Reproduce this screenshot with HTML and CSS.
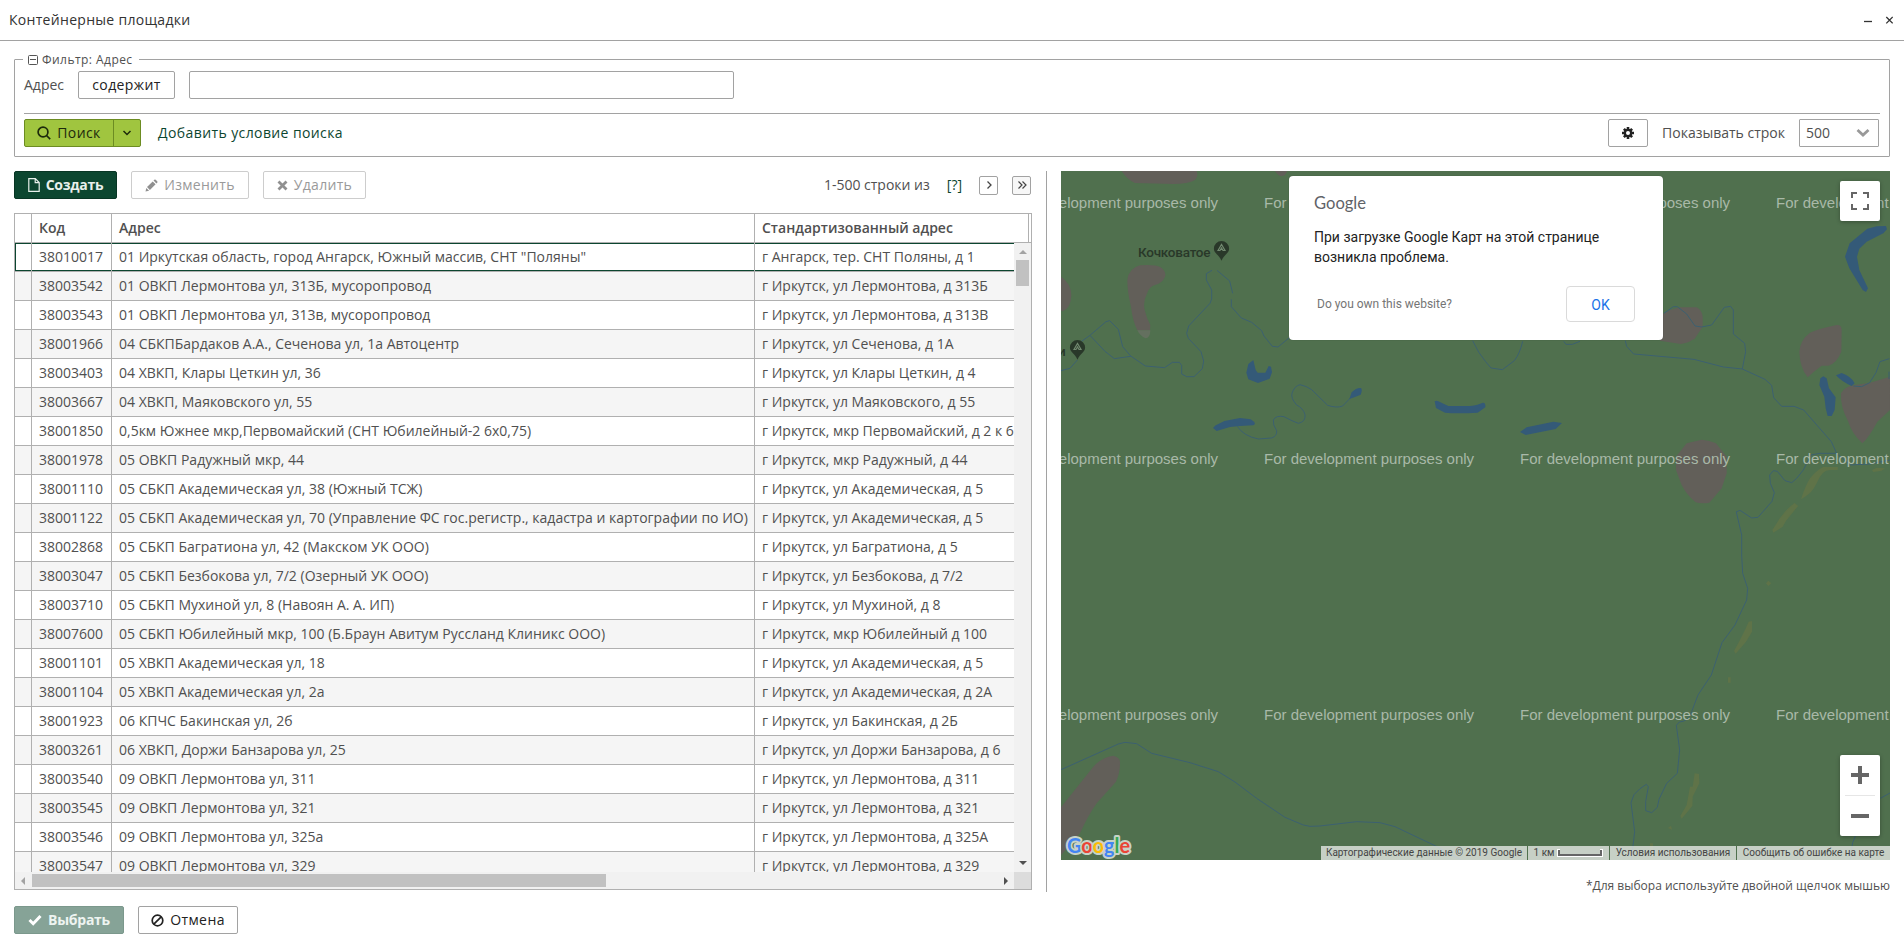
FILE: index.html
```html
<!DOCTYPE html>
<html lang="ru">
<head>
<meta charset="utf-8">
<title>Контейнерные площадки</title>
<link rel="stylesheet" href="styles.css">
</head>
<body>
<header class="titlebar">
  <h1 class="title">Контейнерные площадки</h1>
  <svg class="win-icons" width="30" height="12" viewBox="0 0 30 12"><path d="M1 7.500h8" stroke="#333" stroke-width="1.300"/><path d="M23.300 3l6.400 6.400M29.700 3l-6.400 6.400" stroke="#333" stroke-width="1.300"/></svg>
</header>

<section class="filter">
  <div class="legend"><svg width="10" height="10" viewBox="0 0 10 10"><rect x=".5" y=".5" width="9" height="9" rx="1" fill="none" stroke="#555"/><path d="M2 4.500h6" stroke="#555"/></svg>Фильтр: Адрес</div>
  <div class="condition">
    <span class="label">Адрес</span>
    <button class="btn contains">содержит</button>
    <input class="value" type="text">
  </div>
  <div class="actions">
    <div class="split"><button class="search"><svg width="14" height="14" viewBox="0 0 14 14" fill="none" stroke="#1d2a0c" stroke-width="1.700"><circle cx="6" cy="6" r="4.900"/><path d="M9.500 9.500l3.700 3.700"/></svg>Поиск</button><button class="drop"><svg width="10" height="8" viewBox="0 0 10 8" fill="none" stroke="#1d2a0c" stroke-width="1.500"><path d="M1.500 2l3.500 3.500L8.500 2"/></svg></button></div>
    <a class="add">Добавить условие поиска</a>
    <button class="btn gear"><svg width="12" height="12" viewBox="0 0 12 12"><g stroke="#222" stroke-width="2.600"><path d="M6 0v12M0 6h12M1.900 1.900l8.200 8.200M10.100 1.900l-8.200 8.200"/></g><circle cx="6" cy="6" r="4.300" fill="#222"/><circle cx="6" cy="6" r="2" fill="#fff"/></svg></button>
    <span class="label">Показывать строк</span>
    <div class="select"><span>500</span><svg width="14" height="10" viewBox="0 0 14 10" fill="none" stroke="#999" stroke-width="2.800"><path d="M1.500 2l5.500 5L12.500 2"/></svg></div>
  </div>
</section>

<main class="main">
  <section class="left">
    <div class="toolbar">
      <button class="btn primary create"><svg width="12" height="14" viewBox="0 0 12 14" fill="none" stroke="#e8f0ec" stroke-width="1.200"><path d="M.8.7h6.500l3.900 3.900v8.700H.8zM7.200.7v4h4"/></svg>Создать</button>
      <button class="btn disabled edit"><svg width="13" height="13" viewBox="0 0 13 13" fill="#909090"><path d="M.5 12.500l.8-3.600 2.800 2.800zM2 8.100L7.700 2.400l2.900 2.900L4.900 11zM8.500 1.600l.8-.8q.7-.7 1.400 0l1.500 1.500q.7.700 0 1.400l-.8.800z"/></svg>Изменить</button>
      <button class="btn disabled delete"><svg width="11" height="11" viewBox="0 0 11 11" stroke="#909090" stroke-width="2.800"><path d="M1.500 1.500l8 8M9.500 1.500l-8 8"/></svg>Удалить</button>
      <span class="pager-text">1-500 строки из</span>
      <a class="count">[?]</a>
      <button class="page"><svg width="10" height="10" viewBox="0 0 10 10" fill="none" stroke="#444" stroke-width="1.300"><path d="M3.500 1.500L7 5 3.500 8.500"/></svg></button>
      <button class="page last"><svg width="10" height="10" viewBox="0 0 10 10" fill="none" stroke="#444" stroke-width="1.200"><path d="M1.500 1.500L5 5 1.500 8.500M5.500 1.500L9 5 5.500 8.500"/></svg></button>
    </div>
    <div class="grid">
      <div class="row head"><span></span><span>Код</span><span>Адрес</span><span>Стандартизованный адрес</span></div>
      <div class="viewport">
        <div class="rows" id="rows"></div>
        <div class="vscroll"><i class="up"></i><i class="vthumb"></i><i class="down"></i></div>
        <div class="hscroll"><i class="lft"></i><i class="hthumb"></i><i class="rgt"></i></div>
        <div class="corner"></div>
      </div>
    </div>
  </section>

  <section class="right">
    <div class="map">
      <svg class="canvas" width="829" height="689" viewBox="1061 171 829 689">
        <rect x="1061" y="171" width="829" height="689" fill="#50704e"/>
        <g transform="translate(1040 160) scale(.33333)">
          <g fill="#625f59">
            <path d="M245 33Q262 60 285 69L400 72Q445 72 465 60Q476 48 470 33zM705 33Q718 55 735 45L742 33z"/>
            <path d="M262 360Q266 325 300 316Q345 313 362 322Q380 335 375 350Q368 368 345 375Q328 380 322 398Q308 425 314 450Q320 475 331 495L330 511H292Q277 480 273 440Q262 395 262 360zM63 350Q93 370 94 405Q93 445 68 454L63 452z"/>
          </g>
          <path d="M292 511H331Q330 535 317 535Q300 528 292 511z" fill="#64705f"/>
          <g class="river">
            <path d="M63 632L90 625 112 600M112 553L150 526 198 485 209 482 235 508 248 560 272 588 316 618 374 623 397 607H418L425 616V642L440 650H462L487 626 491 603 483 575 445 535 440 520 446 498 510 430 515 417V390L499 360V341L516 331M150 526L195 574 223 596 272 589M531 331L569 363 578 400M574 418V440L604 474 635 487 665 512 672 528 697 559 714 561 747 534"/>
            <path d="M592 799Q610 828 655 837L695 834Q712 828 710 812Q698 795 700 780Q708 765 732 770Q758 784 775 790Q798 785 795 764Q790 745 770 735Q752 715 756 700Q763 678 780 674Q800 678 815 689L863 736Q890 745 908 738L935 710"/>
          </g>
          <g class="lake">
            <path d="M640 600L625 612 619 638 625 658 654 669 689 656 696 637 693 620 686 618 676 638H653L647 630z"/>
            <path d="M519 804Q525 795 535 792L553 783 600 774 632 778Q644 785 645 792L640 796 600 798 570 801 530 813zM935 697Q950 682 963 684Q968 690 962 704L945 711 928 717z"/>
            <path d="M1184 724Q1190 720 1195 724L1225 738H1290Q1315 735 1328 728Q1338 727 1336 742L1313 758Q1250 762 1215 758L1188 744z"/>
          </g>
        </g>
        <g transform="translate(1440 160) scale(.33333)">
          <g fill="#625f59">
            <path d="M662 465L690 450 720 442H770Q785 450 788 470V500L765 535Q745 550 722 552L660 542z"/>
            <path d="M1103 652Q1080 625 1078 575Q1080 540 1110 518Q1130 508 1190 495Q1204 493 1205 510L1204 575Q1190 610 1165 617H1145Q1120 635 1103 652z"/>
            <path d="M1203 700Q1215 680 1240 676L1290 668 1350 650V750L1312 785Q1285 835 1267 850Q1235 820 1225 785Q1200 740 1203 700z"/>
            <path d="M785 839L808 843 828 850 860 890V940L845 985 808 1028Q785 1032 767 1027Q740 1005 725 975L708 930V890L740 850z"/>
          </g>
          <g fill="#5f7348">
            <path d="M1150 921H1194L1193 930H1170Q1145 930 1130 970Q1115 1000 1095 1010L1083 1018Q1095 980 1110 955Q1130 930 1150 921zM1296 930L1310 923 1335 925 1325 932 1300 936zM1064 1029L1074 1038 1040 1080H1016Q1040 1045 1064 1029z"/>
          </g>
          <g class="river">
            <path d="M98 542Q115 580 137 605L153 624 187 629 223 602Q240 580 248 544M371 544L378 553H397L420 544M556 542L560 559 581 582 762 598 850 621 907 627 975 658 995 676 1001 713 1025 739H1062L1091 750 1174 845 1190 880M672 460L700 440H712L740 462 765 498 785 501 815 495 853 442 872 439 880 450V522L914 550 917 575 907 627M1240 678L1265 680 1289 668 1308 638 1320 605 1348 596M1347 635V657"/>
            <path d="M1190 880H1140L1113 885 1090 930 1070 955 1055 968 1035 962 1012 934 1000 932 989 945 991 970 1003 998 996 1024 954 1072 935 1074 900 1051 888 1056M1190 880L1230 915 1290 912 1350 900"/>
          </g>
          <g class="lake">
            <path d="M240 816L260 802 340 785 366 789 347 807 257 825zM1338 198L1341 208 1330 220 1280 245 1258 266 1251 290 1258 330 1284 385 1278 396 1268 390 1228 325 1215 290 1229 250 1282 206 1310 199z"/>
            <path d="M1150 649L1160 655 1167 685 1187 712 1184 750 1175 768H1163L1157 745 1153 710 1138 675 1141 655zM1188 646L1205 639Q1235 650 1244 670L1235 678Q1205 665 1188 646z"/>
          </g>
        </g>
        <g transform="translate(1640 440) scale(.33333)">
          <g fill="#5f7348"><path d="M463 190L474 198 448 225 428 260 400 278 397 270 420 235zM385 422L394 430 385 438 378 430zM326 545L336 543V575L318 605 287 641 282 633 300 600 315 570zM264 712H272V728H264zM164 1000L177 1002 178 1030 158 1070 157 1098 125 1136 121 1128 140 1095 150 1040H158zM93 1157L96 1169 84 1164zM30 1210H39V1240H28z"/></g>
          <path class="river" d="M289 216L305 285V345L308 400 323 445 320 480 285 555 246 608 214 705 174 765 155 815M155 815Q145 845 118 846L109 856 119 930 112 1000 80 1030 57 1078 52 1102 35 1118 17 1112V1085L25 1040 19 1033 0 1046-18 1064-27 1088-16 1175-26 1260M721 1075L750 1059M646 1188L638 1208 630 1260"/>
        </g>
        <g transform="translate(1040 700) scale(.33333)">
          <path fill="#625f59" d="M63 322L160 200Q185 172 220 167Q242 172 240 190Q240 220 228 245L170 310Q145 345 120 400L63 466z"/>
          <path class="river" d="M63 209L235 132 255 127 290 131 335 160 450 188 535 215 585 246 650 295 735 352 790 375 810 379 840 378 950 365 1020 368 1065 380 1185 437 1300 500"/>
        </g>
        <g fill="#293829">
          <text class="place" x="1138" y="256.500" textLength="72.500">Кочковатое</text>
          <text class="place" x="1058" y="356">и</text>
          <path d="M1221.500 241a7.600 7.600 0 0 1 7.600 7.600c0 5-5 5.800-7.600 12.200c-2.600-6.400-7.600-7.200-7.600-12.200a7.600 7.600 0 0 1 7.600-7.600z"/>
          <path d="M1077.500 340a7.600 7.600 0 0 1 7.600 7.600c0 5-5 5.800-7.600 12.200c-2.600-6.400-7.600-7.200-7.600-12.200a7.600 7.600 0 0 1 7.600-7.600z"/>
        </g>
        <path d="M1218 250.500l3.500-6 3.500 6h-2l-1.500-2.500-1.500 2.500zM1074 349.500l3.500-6 3.500 6h-2l-1.500-2.500-1.500 2.500z" fill="none" stroke="#71896f" stroke-width="1.200"/>
        <g class="mark">
          <text x="1008" y="208">For development purposes only</text><text x="1264" y="208">For development purposes only</text><text x="1520" y="208">For development purposes only</text><text x="1776" y="208">For development purposes only</text>
          <text x="1008" y="464">For development purposes only</text><text x="1264" y="464">For development purposes only</text><text x="1520" y="464">For development purposes only</text><text x="1776" y="464">For development purposes only</text>
          <text x="1008" y="720">For development purposes only</text><text x="1264" y="720">For development purposes only</text><text x="1520" y="720">For development purposes only</text><text x="1776" y="720">For development purposes only</text>
        </g>
        <text class="logo" x="1067" y="853" textLength="63" lengthAdjust="spacingAndGlyphs"><tspan fill="#4285f4">G</tspan><tspan fill="#ea4335">o</tspan><tspan fill="#fbbc05">o</tspan><tspan fill="#4285f4">g</tspan><tspan fill="#34a853">l</tspan><tspan fill="#ea4335">e</tspan></text>
      </svg>

      <div class="dialog">
        <svg width="54" height="22" viewBox="0 0 54 22"><text class="glogo" x="0" y="12.500" textLength="52" lengthAdjust="spacingAndGlyphs">Google</text></svg>
        <p class="msg">При загрузке Google Карт на этой странице<br>возникла проблема.</p>
        <div class="dialog-foot"><span class="own">Do you own this website?</span><button class="ok">OK</button></div>
      </div>
      <div class="ctl full"><svg width="18" height="18" viewBox="0 0 18 18" fill="none" stroke="#666" stroke-width="2"><path d="M1 6V1h5M12 1h5v5M17 12v5h-5M6 17H1v-5"/></svg></div>
      <div class="ctl zoom"><svg width="40" height="81" viewBox="0 0 40 81"><path d="M11 20h18M20 11v18M11 61h18" stroke="#666" stroke-width="4"/><path d="M5 40.500h30" stroke="#e6e6e6"/></svg></div>
      <div class="credits">
        <span class="c1">Картографические данные © 2019 Google</span>
        <span class="c2">1 км<svg width="46" height="8" viewBox="0 0 46 8" fill="none"><path d="M1.500 0v6.500h43V0" stroke="#fff" stroke-width="3"/><path d="M2 1v5h42V1" stroke="#666" stroke-width="2"/></svg></span>
        <span class="c3">Условия использования</span>
        <span class="c4">Сообщить об ошибке на карте</span>
      </div>
    </div>
    <p class="note">*Для выбора используйте двойной щелчок мышью</p>
  </section>
</main>

<footer class="footer">
  <button class="btn primary faded choose"><svg width="14" height="12" viewBox="0 0 14 12" fill="none" stroke="#fff" stroke-width="3"><path d="M1.500 6l3.700 3.700L12.500 2"/></svg>Выбрать</button>
  <button class="btn cancel"><svg width="13" height="13" viewBox="0 0 13 13" fill="none" stroke="#222" stroke-width="1.700"><circle cx="6.500" cy="6.500" r="5.300"/><path d="M2.800 10.200l7.400-7.400"/></svg>Отмена</button>
</footer>
<script src="rows.js"></script>
</body>
</html>
```
FILE: rows.js
```js
const data = [
  ['38010017', '01 Иркутская область, город Ангарск, Южный массив, СНТ "Поляны"', 'г Ангарск, тер. СНТ Поляны, д 1'],
  ['38003542', '01 ОВКП Лермонтова ул, 313Б, мусоропровод', 'г Иркутск, ул Лермонтова, д 313Б'],
  ['38003543', '01 ОВКП Лермонтова ул, 313в, мусоропровод', 'г Иркутск, ул Лермонтова, д 313В'],
  ['38001966', '04 СБКПБардаков А.А., Сеченова ул, 1а Автоцентр', 'г Иркутск, ул Сеченова, д 1А'],
  ['38003403', '04 ХВКП, Клары Цеткин ул, 36', 'г Иркутск, ул Клары Цеткин, д 4'],
  ['38003667', '04 ХВКП, Маяковского ул, 55', 'г Иркутск, ул Маяковского, д 55'],
  ['38001850', '0,5км Южнее мкр,Первомайский (СНТ Юбилейный-2 6х0,75)', 'г Иркутск, мкр Первомайский, д 2 к 6'],
  ['38001978', '05 ОВКП Радужный мкр, 44', 'г Иркутск, мкр Радужный, д 44'],
  ['38001110', '05 СБКП Академическая ул, 38 (Южный ТСЖ)', 'г Иркутск, ул Академическая, д 5'],
  ['38001122', '05 СБКП Академическая ул, 70 (Управление ФС гос.регистр., кадастра и картографии по ИО)', 'г Иркутск, ул Академическая, д 5'],
  ['38002868', '05 СБКП Багратиона ул, 42 (Макском УК ООО)', 'г Иркутск, ул Багратиона, д 5'],
  ['38003047', '05 СБКП Безбокова ул, 7/2 (Озерный УК ООО)', 'г Иркутск, ул Безбокова, д 7/2'],
  ['38003710', '05 СБКП Мухиной ул, 8 (Навоян А. А. ИП)', 'г Иркутск, ул Мухиной, д 8'],
  ['38007600', '05 СБКП Юбилейный мкр, 100 (Б.Браун Авитум Руссланд Клиникс ООО)', 'г Иркутск, мкр Юбилейный д 100'],
  ['38001101', '05 ХВКП Академическая ул, 18', 'г Иркутск, ул Академическая, д 5'],
  ['38001104', '05 ХВКП Академическая ул, 2а', 'г Иркутск, ул Академическая, д 2А'],
  ['38001923', '06 КПЧС Бакинская ул, 2б', 'г Иркутск, ул Бакинская, д 2Б'],
  ['38003261', '06 ХВКП, Доржи Банзарова ул, 25', 'г Иркутск, ул Доржи Банзарова, д 6'],
  ['38003540', '09 ОВКП Лермонтова ул, 311', 'г Иркутск, ул Лермонтова, д 311'],
  ['38003545', '09 ОВКП Лермонтова ул, 321', 'г Иркутск, ул Лермонтова, д 321'],
  ['38003546', '09 ОВКП Лермонтова ул, 325а', 'г Иркутск, ул Лермонтова, д 325А'],
  ['38003547', '09 ОВКП Лермонтова ул, 329', 'г Иркутск, ул Лермонтова, д 329']
];
document.getElementById('rows').innerHTML = data
  .map((r, i) => `<div class="row${i ? '' : ' selected'}"><span></span>${r.map(c => `<span>${c}</span>`).join('')}</div>`)
  .join('');
```
FILE: styles.css
```css
* { box-sizing: border-box; }
body {
  margin: 0;
  width: 1904px;
  height: 948px;
  overflow: hidden;
  background: #fff;
  color: #505050;
  font: 14px/20px "Open Sans", "Noto Sans", sans-serif;
}
svg { display: block; flex: none; }
button { font: inherit; padding: 0; margin: 0; }
p, h1 { margin: 0; }

.titlebar {
  height: 41px;
  padding: 0 11px 0 9px;
  border-bottom: 1px solid #a2a2a2;
  display: flex;
  align-items: center;
  justify-content: space-between;
}
.title { font-size: 14px; font-weight: 500; letter-spacing: .3px; color: #333; }

.filter {
  margin: 18px 14px 0;
  height: 98px;
  padding: 0 9px;
  border: 1px solid #a2a2a2;
  border-radius: 1px;
}
.legend {
  display: flex;
  width: fit-content;
  align-items: center;
  gap: 4px;
  margin-left: -1px;
  margin-top: -9px;
  height: 18px;
  padding: 0 6px 0 5px;
  background: #fff;
  font-size: 12px;
  letter-spacing: .45px;
}
.condition { display: flex; align-items: center; margin-top: 2px; height: 28px; }
.btn {
  height: 28px;
  display: flex;
  align-items: center;
  justify-content: center;
  border: 1px solid #a2a2a2;
  border-radius: 2px;
  background: #fff;
  color: #222;
  font-weight: 500;
  letter-spacing: .4px;
  gap: 6px;
}
.contains { width: 97px; margin-left: 14px; }
.condition .label { width: 40px; }
.value { width: 545px; height: 28px; margin-left: 14px; border: 1px solid #a2a2a2; border-radius: 2px; }
.actions {
  display: flex;
  align-items: center;
  margin-top: 14px;
  padding: 5px 1px 0 0;
  border-top: 1px solid #a2a2a2;
}
.split { display: flex; width: 117px; height: 28px; border: 1px solid #6c8c22; border-radius: 2px; background: #a0c53f; color: #1d2a0c; }
.split button { border: 0; background: none; color: inherit; display: flex; align-items: center; justify-content: center; }
.search { width: 88px; gap: 6px; font-weight: 500; letter-spacing: .4px; }
.split .drop { width: 27px; border-left: 1px solid #6c8c22; }
.add { margin-left: 17px; color: #0c4630; font-weight: 500; letter-spacing: .4px; }
.gear { width: 40px; margin-left: auto; margin-right: 14px; }
.select {
  width: 80px;
  height: 28px;
  margin-left: 14px;
  padding: 0 8px 0 6px;
  border: 1px solid #a2a2a2;
  border-radius: 1px;
  display: flex;
  align-items: center;
  justify-content: space-between;
}

.main { display: flex; height: 735px; padding: 14px 14px 0; }
.left { width: 1033px; padding-right: 14px; height: 721px; border-right: 1px solid #a2a2a2; }
.toolbar { display: flex; align-items: center; height: 28px; }
.primary { background: #0c4630; border-color: #083524; color: #e8f0ec; font-weight: 700; letter-spacing: -.25px; }
.create { width: 103px; }
.disabled { border-color: #cdcdcd; color: #9a9a9a; font-weight: 400; letter-spacing: .3px; }
.edit { width: 118px; margin-left: 14px; }
.delete { width: 103px; margin-left: 14px; }
.pager-text { margin-left: auto; }
.count { margin: 0 17px; color: #0c4630; font-weight: 500; }
.page {
  width: 19px;
  height: 19px;
  border: 1px solid #a2a2a2;
  border-radius: 2px;
  background: #fff;
  display: flex;
  align-items: center;
  justify-content: center;
}
.last { margin-left: 14px; margin-right: 1px; background: #f7f7f7; }

.grid { width: 1018px; height: 677px; margin-top: 14px; border: 1px solid #b0b0b0; }
.row {
  display: grid;
  grid-template-columns: 17px 80px 643px 1fr;
  height: 29px;
  border-bottom: 1px solid #b0b0b0;
  line-height: 28px;
}
.row span { border-right: 1px solid #b0b0b0; padding-left: 7px; white-space: nowrap; overflow: hidden; }
.rows .row span:last-child { border-right: 0; }
.head { font-weight: 600; padding-right: 2px; }
.viewport { display: grid; grid-template-columns: 1fr 17px; grid-template-rows: 629px 17px; }
.rows { overflow: hidden; }
.rows .row:nth-child(even) { background: #f5f5f5; }
.rows .selected { box-shadow: inset 1px 1px #0c4630, inset 0 -1px #0c4630; }
.vscroll, .hscroll { background: #f1f1f1; display: flex; align-items: center; }
.vscroll { flex-direction: column; }
.up, .down { border: 4px solid transparent; border-top: 0; border-bottom: 4px solid #a3a3a3; margin-top: 7px; }
.down { border-bottom: 0; border-top: 4px solid #505050; margin: auto 0 7px; }
.vthumb { width: 13px; height: 26px; margin-top: 6px; background: #c1c1c1; }
.lft, .rgt { border: 4px solid transparent; border-left: 0; border-right: 4px solid #a3a3a3; margin-left: 6px; }
.rgt { border-right: 0; border-left: 4px solid #505050; margin: 0 6px 0 auto; }
.hthumb { width: 574px; height: 13px; margin-left: 7px; background: #c1c1c1; }
.corner { background: #dcdcdc; }

.right { width: 829px; margin-left: 14px; }
.map { position: relative; height: 689px; overflow: hidden; }
.river { fill: none; stroke: #3c6070; stroke-width: 3px; }
.lake { fill: #345a78; }
.place { font: 500 13.500px Roboto, sans-serif; }
.mark { font: 15px "Liberation Sans", Arial, sans-serif; fill: #a9b9a8; }
.logo { font: 700 21px Lato, sans-serif; stroke: #c8d2c7; stroke-width: 4px; paint-order: stroke; stroke-linejoin: round; }
.dialog {
  position: absolute;
  left: 228px;
  top: 5px;
  width: 374px;
  height: 164px;
  padding: 20px 28px 0 25px;
  background: #fff;
  border-radius: 4px;
  box-shadow: 0 0 1px rgba(0, 0, 0, .4);
  font-family: Roboto, sans-serif;
}
.glogo { font: 18px Lato, sans-serif; fill: #5f6368; }
.msg { margin-top: 9px; font-size: 14px; line-height: 20px; color: #222; white-space: nowrap; }
.dialog-foot { display: flex; align-items: center; justify-content: space-between; margin-top: 19px; padding-left: 3px; }
.own { font-size: 12px; color: #757575; }
.ok { width: 69px; height: 36px; padding-top: 1px; border: 1px solid #dadada; border-radius: 4px; background: #fff; color: #1a73e8; font-size: 14px; }
.ctl { position: absolute; background: #fff; border-radius: 2px; box-shadow: 0 1px 4px rgba(0, 0, 0, .3); }
.full { right: 10px; top: 10px; padding: 11px; }
.zoom { right: 10px; top: 584px; }
.credits {
  position: absolute;
  right: 0;
  bottom: 0;
  height: 14px;
  display: flex;
  gap: 1px;
  font: 10px/14px Roboto, sans-serif;
  color: #444;
  white-space: nowrap;
}
.credits span { background: rgba(245, 245, 245, .72); display: flex; justify-content: center; }
.c1 { width: 206px; }
.c2 { width: 81px; gap: 3px; align-items: center; }
.c3 { width: 126px; }
.c4 { width: 153px; }
.note { margin-top: 16px; text-align: right; font-size: 12px; }

.footer { display: flex; gap: 14px; padding: 14px 14px 0; }
.choose { width: 110px; }
.faded { background: #86a397; border-color: #7b988c; color: #eef4f1; }
.cancel { width: 100px; }
```
